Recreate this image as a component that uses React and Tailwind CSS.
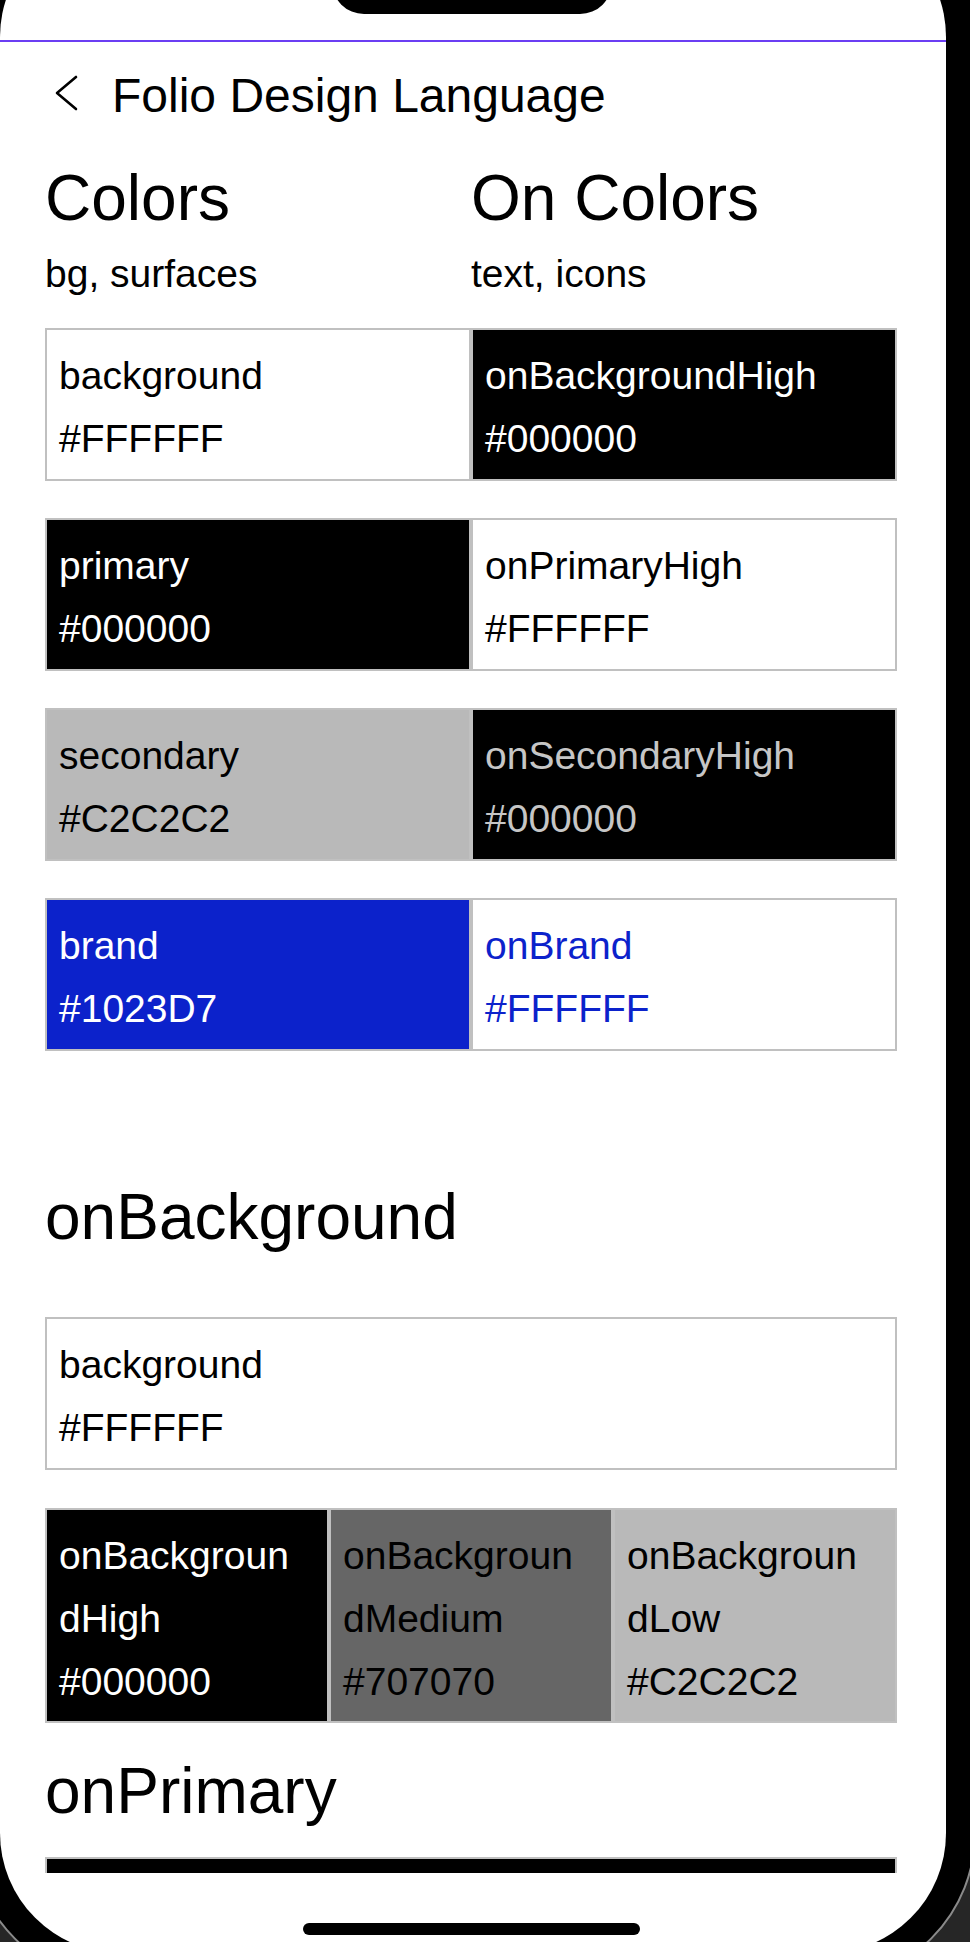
import React from "react";

const rows = [
  [
    { name: "background", hex: "#FFFFFF", cls: "bg-white text-black" },
    { name: "onBackgroundHigh", hex: "#000000", cls: "bg-black text-white" },
  ],
  [
    { name: "primary", hex: "#000000", cls: "bg-black text-white" },
    { name: "onPrimaryHigh", hex: "#FFFFFF", cls: "bg-white text-black" },
  ],
  [
    { name: "secondary", hex: "#C2C2C2", cls: "bg-[#b9b9b9] text-black" },
    { name: "onSecondaryHigh", hex: "#000000", cls: "bg-black text-[#c6c6c6]" },
  ],
  [
    { name: "brand", hex: "#1023D7", cls: "bg-[#0c22cb] text-white" },
    { name: "onBrand", hex: "#FFFFFF", cls: "bg-white text-[#0c22cb]" },
  ],
];

const onBg = [
  { name: "onBackgroundHigh", hex: "#000000", cls: "bg-black text-white" },
  { name: "onBackgroundMedium", hex: "#707070", cls: "bg-[#666666] text-black" },
  { name: "onBackgroundLow", hex: "#C2C2C2", cls: "bg-[#b9b9b9] text-black" },
];

function Cell({ name, hex, cls }) {
  return (
    <div
      className={`flex-1 min-w-0 border-2 border-[#c0c0c0] pl-[12px] pr-[28px] pt-[14px] pb-[9px] text-[39px] leading-[63px] break-all ${cls}`}
    >
      <div>{name}</div>
      <div>{hex}</div>
    </div>
  );
}

function Card({ cells }) {
  return (
    <div className="flex">
      {cells.map((c) => (
        <Cell key={c.name} {...c} />
      ))}
    </div>
  );
}

export default function App() {
  return (
    <div className="relative w-[970px] h-[1942px] overflow-hidden bg-[#262626] font-['Liberation_Sans',Arial,sans-serif]">
      {/* phone bezel */}
      <div className="absolute left-[-30px] top-[-200px] w-[1006px] h-[2183px] rounded-[150px] bg-black border-2 border-[#8a8a8a]" />

      {/* screen */}
      <div className="relative mt-[-83px] w-[946px] h-[2036px] rounded-[120px] bg-white overflow-hidden">
        <div className="h-[123px]" />
        <div className="h-[2px] bg-[#6b3df3]" />

        <div className="h-[1831px] overflow-hidden pl-[45px] pr-[49px] text-black">
          {/* header */}
          <div className="flex items-start mt-[26px]">
            <svg
              className="ml-[10px] mt-[7px] shrink-0"
              width="24"
              height="36"
              viewBox="0 0 24 36"
              fill="none"
            >
              <path
                d="M21 2 L2 18 L21 34"
                stroke="#000"
                strokeWidth="2.6"
                strokeLinecap="round"
                strokeLinejoin="round"
              />
            </svg>
            <div className="ml-[33px] text-[48px] leading-[56px]">
              Folio Design Language
            </div>
          </div>

          {/* section headings */}
          <div className="grid grid-cols-2 mt-[38px]">
            <div>
              <div className="text-[64px] leading-[72px]">Colors</div>
              <div className="mt-[16px] text-[39px] leading-[48px]">
                bg, surfaces
              </div>
            </div>
            <div>
              <div className="text-[64px] leading-[72px]">On Colors</div>
              <div className="mt-[16px] text-[39px] leading-[48px]">
                text, icons
              </div>
            </div>
          </div>

          <div className="flex flex-col gap-[37px] mt-[30px]">
            {rows.map((r, i) => (
              <Card key={i} cells={r} />
            ))}
          </div>

          <div className="mt-[130px] text-[64px] leading-[72px]">
            onBackground
          </div>

          <div className="mt-[64px]">
            <Card
              cells={[{ name: "background", hex: "#FFFFFF", cls: "bg-white text-black" }]}
            />
          </div>

          <div className="mt-[38px] flex">
            {onBg.map((c) => (
              <div
                key={c.name}
                className={`flex-1 min-w-0 border-2 border-[#c0c0c0] pl-[12px] pr-[28px] pt-[14px] pb-[8px] text-[39px] leading-[63px] break-all ${c.cls}`}
              >
                <div>{c.name}</div>
                <div>{c.hex}</div>
              </div>
            ))}
          </div>

          <div className="mt-[32px] text-[64px] leading-[72px]">onPrimary</div>

          <div className="mt-[30px]">
            <Card
              cells={[{ name: "primary", hex: "#000000", cls: "bg-black text-white" }]}
            />
          </div>
        </div>

        {/* notch */}
        <div className="absolute left-[332px] top-[23px] w-[280px] h-[74px] rounded-[32px] bg-black" />
        {/* home indicator */}
        <div className="absolute left-[303px] top-[2006px] w-[337px] h-[12px] rounded-full bg-black" />
      </div>
    </div>
  );
}
